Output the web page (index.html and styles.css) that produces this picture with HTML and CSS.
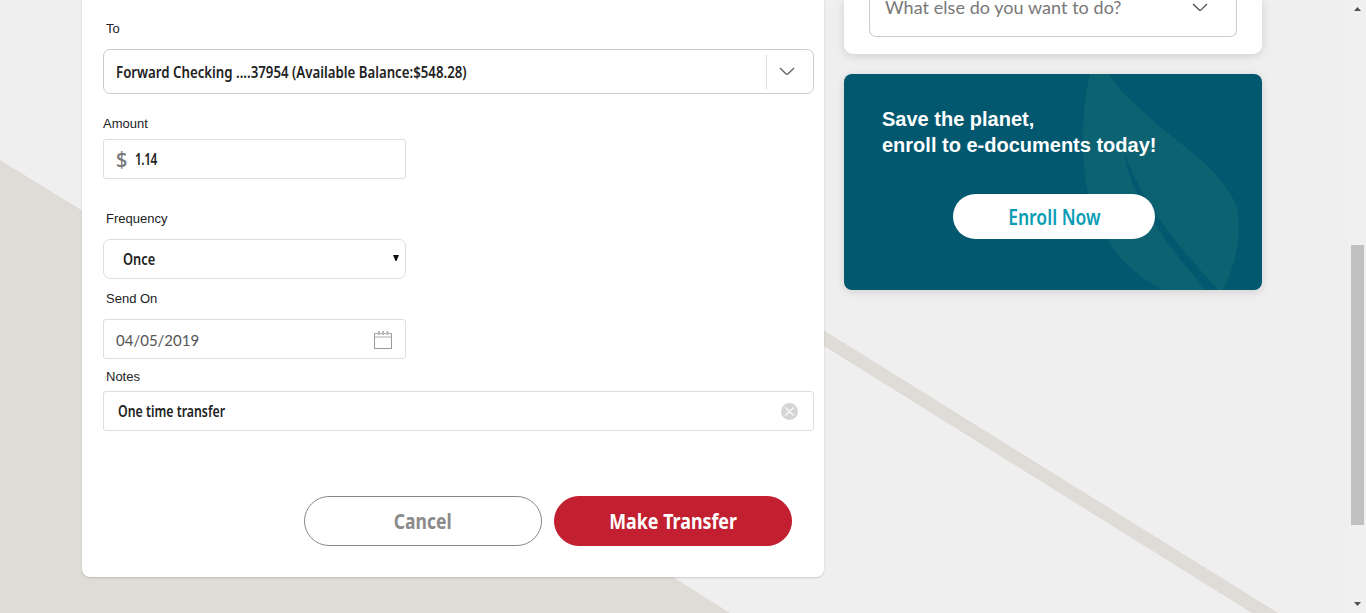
FILE: index.html
```html
<!DOCTYPE html>
<html lang="en">
<head>
<meta charset="utf-8">
<title>Make a Transfer</title>
<link rel="stylesheet" href="styles.css">
</head>
<body>
<div class="page">
  <svg class="backdrop" viewBox="0 0 1366 613" aria-hidden="true">
    <path d="M0 160L82 210.500 673 577 730 613H0zM824 330.500L1278 613H1252L824 346z"/>
  </svg>
  <main class="transfer">
    <label class="label label-to">To</label>
    <div class="field account">
      <span class="cond account-text">Forward Checking ....37954 (Available Balance:$548.28)</span>
      <span class="account-toggle"><svg width="16" height="9" viewBox="0 0 16 9"><path d="M1 1L6.800 6.700Q8 7.800 9.200 6.700L15 1"/></svg></span>
    </div>
    <label class="label label-amount">Amount</label>
    <div class="field amount"><span class="dollar cond">$</span><span class="cond amount-text">1.14</span></div>
    <label class="label label-frequency">Frequency</label>
    <div class="field frequency"><span class="cond once-text">Once</span><svg width="6" height="6" viewBox="0 0 6 6"><path d="M0 0H6L3.500 6H2.500z"/></svg></div>
    <label class="label label-send">Send On</label>
    <div class="field date"><span>04/05/2019</span>
      <svg width="18" height="18" viewBox="0 0 18 18"><path class="frame" d="M.5 2V17.500H17.500V2M0 17.500H18"/><path class="bar" d="M0 2.500H18M0 6H18"/><path class="rings" d="M5 0V4M9 0V4M13.500 0V4"/></svg>
    </div>
    <label class="label label-notes">Notes</label>
    <div class="field notes"><span class="cond notes-text">One time transfer</span>
      <svg width="17" height="17" viewBox="0 0 17 17"><circle cx="8.500" cy="8.500" r="8.500"/><path d="M4.300 4.300L12.700 12.700M12.700 4.300L4.300 12.700"/></svg>
    </div>
    <div class="actions">
      <button class="btn cancel"><span class="cond cancel-text">Cancel</span></button>
      <button class="btn submit"><span class="cond submit-text">Make Transfer</span></button>
    </div>
  </main>
  <aside class="side">
    <section class="more"><div class="more-select"><span>What else do you want to do?</span><svg width="16" height="9" viewBox="0 0 16 9"><path d="M1 1L7 6.800Q8 7.800 9 6.800L15 1"/></svg></div></section>
    <section class="promo">
      <svg class="leaf" width="170" height="216" viewBox="0 0 170 216"><path d="M7 0H26C32 10 40 20 52 30C84 62 118 81 138 107C152 124 156 134 156 153C155 178 149 198 140 216H135C114 192 90 166 77 146C60 124 52 104 41 79C45 104 57 129 72 150C88 176 106 196 123 216H80C55 203 37 186 25 166C15 150 8 134 5 119C1 101 0 82 0 63C0 42 2 20 7 0z"/></svg>
      <h2>Save the planet,<br>enroll to e-documents today!</h2>
      <button class="enroll"><span class="cond enroll-text">Enroll Now</span></button>
    </section>
  </aside>
  <div class="scrollbar">
    <svg width="7" height="4" viewBox="0 0 7 4"><path d="M0 4L3.500 0 7 4z"/></svg>
    <div class="thumb"></div>
    <svg width="7" height="4" viewBox="0 0 7 4"><path d="M0 0H7L3.500 4z"/></svg>
  </div>
</div>
</body>
</html>
```

FILE: styles.css
```css
* { box-sizing: border-box; }
body { margin: 0; overflow: hidden; background: #efefef; font-family: "Liberation Sans", sans-serif; }
.page { position: relative; display: flex; height: 613px; padding-left: 82px; overflow: hidden; }
.backdrop { position: absolute; left: 0; top: 0; width: 1366px; height: 613px; fill: #dfdcd7; }
.transfer { position: relative; display: flex; flex-direction: column; align-items: flex-start; width: 742px; height: 577px; padding: 21px 10px 0 21px; background: #fff; border-radius: 0 0 8px 8px; box-shadow: 0 1px 2px rgba(0,0,0,.15); }
.label { height: 16px; padding-left: 3px; font-size: 13px; line-height: 16px; color: #222; white-space: nowrap; }
.label-amount { margin-top: 22px; padding-left: 0; }
.label-frequency { margin-top: 32px; }
.label-send { margin-top: 12px; }
.label-notes { margin-top: 10px; }
.field { display: flex; align-items: center; width: 303px; height: 40px; border: 1px solid #dedede; border-radius: 3px; background: #fff; }
.cond { display: inline-block; flex: none; font-family: "Noto Sans", sans-serif; font-weight: 600; white-space: nowrap; transform-origin: left center; color: #222; }
.account { width: 711px; height: 45px; margin-top: 12px; padding-left: 12px; border-color: #ccc; border-radius: 7px; }
.account-text { font-size: 16px; transform: scaleX(.828); }
.account-toggle { display: flex; align-items: center; width: 47px; height: 34px; margin-left: auto; padding-left: 12px; border-left: 1px solid #ddd; }
.account-toggle svg { fill: none; stroke: #666; stroke-width: 1.4; }
.amount { margin-top: 7px; padding-left: 12px; }
.dollar { width: 19px; font-size: 21px; font-weight: 500; color: #777; transform: scaleX(.95); }
.amount-text { font-size: 16px; letter-spacing: -.6px; transform: scaleX(.74); }
.frequency { justify-content: space-between; margin-top: 12px; padding: 0 6px 0 19px; border-radius: 7px; }
.once-text { font-size: 16px; transform: scaleX(.8); }
.frequency svg { margin-top: -2px; fill: #111; }
.date { justify-content: space-between; margin-top: 12px; padding: 2px 13px 0 12px; font: 15px Lato, sans-serif; color: #555; }
.date .frame { fill: none; stroke: #999; }
.date .bar { stroke: #aaa; }
.date .rings { stroke: #bbb; stroke-width: 2; }
.notes { width: 711px; justify-content: space-between; margin-top: 6px; padding: 0 15px 0 14px; }
.notes-text { font-size: 16px; transform: scaleX(.77); }
.notes circle { fill: #d5d5d5; }
.notes path { stroke: #fff; stroke-width: 1.2; }
.actions { display: flex; gap: 12px; margin: 65px 0 0 201px; }
.btn { display: flex; justify-content: center; align-items: center; width: 238px; height: 50px; padding: 0; border: 1px solid #888; border-radius: 25px; background: #fff; }
.btn .cond, .enroll .cond { font-size: 21px; transform-origin: center; }
.btn .cond { font-weight: 700; }
.btn .cancel-text { color: #8b8b8b; transform: scaleX(.835); }
.submit { border-color: #c22030; background: #c22030; }
.btn .submit-text { color: #fff; transform: scaleX(.85); }
.side { position: relative; width: 418px; margin-left: 20px; }
.more { height: 54px; padding: 0 25px; background: #fff; border-radius: 0 0 9px 9px; box-shadow: 0 2px 10px rgba(0,0,0,.13); }
.more-select { display: flex; justify-content: space-between; height: 37px; padding: 0 28px 0 15px; border: 1px solid #ccc; border-top: 0; border-radius: 0 0 7px 7px; font: 18px/14px Lato, sans-serif; letter-spacing: .05px; color: #777; }
.more-select svg { margin-top: 3px; fill: none; stroke: #444; stroke-width: 1.2; }
.promo { position: relative; height: 216px; margin-top: 20px; padding: 32px 38px 0; border-radius: 8px; background: #01586f; box-shadow: 0 2px 10px rgba(0,0,0,.13); }
.leaf { position: absolute; left: 239px; top: 0; fill: #0d6272; }
.promo h2 { position: relative; margin: 0; color: #fff; font-size: 20px; line-height: 26px; white-space: nowrap; }
.enroll { position: relative; display: flex; justify-content: center; align-items: center; width: 202px; height: 45px; margin: 36px 0 0 71px; padding: 0; border: 0; border-radius: 23px; background: #fff; }
.enroll .enroll-text { color: #089db5; transform: scaleX(.835); }
.scrollbar { position: relative; display: flex; flex-direction: column; align-items: center; width: 17px; height: 613px; margin-left: auto; padding: 7px 0 7px 0; background: #f0f0f0; }
.scrollbar svg { fill: #505050; }
.thumb { width: 13px; height: 280px; margin: 234px 0 77px; background: #c1c1c1; }
```
